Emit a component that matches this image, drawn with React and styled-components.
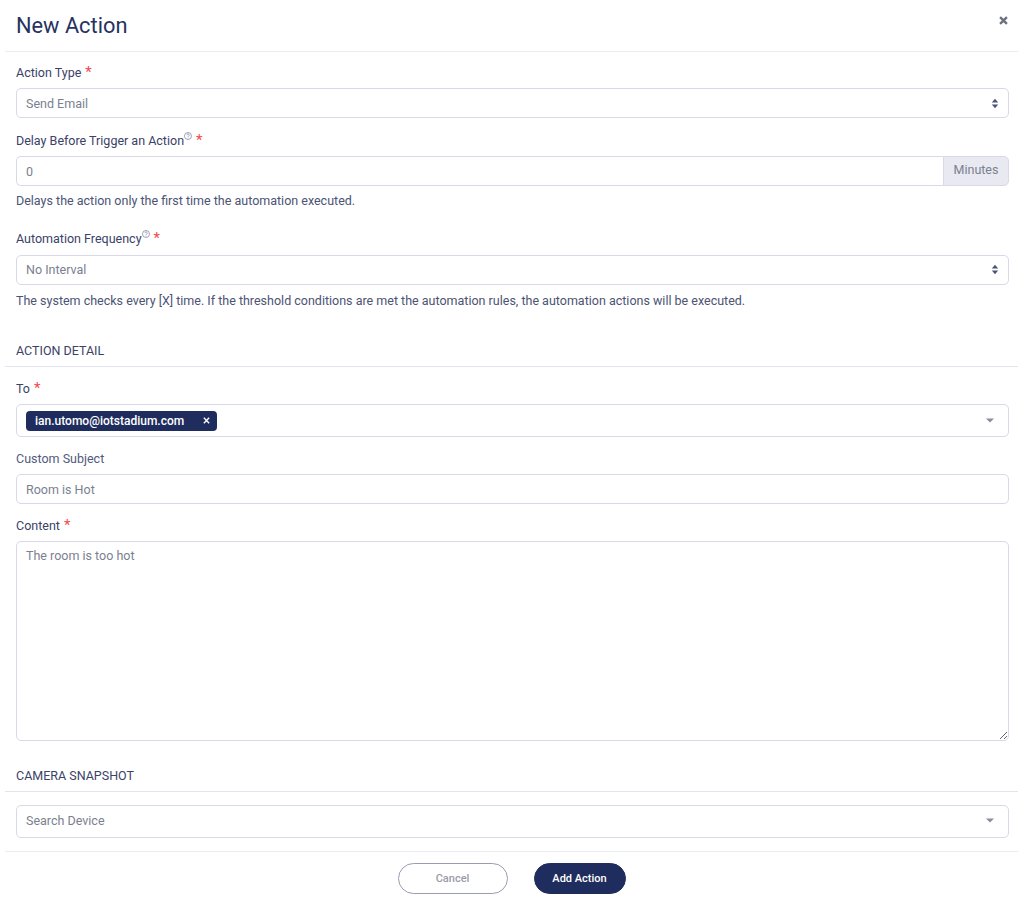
import React from 'react';
import styled, { createGlobalStyle } from 'styled-components';

const GlobalStyle = createGlobalStyle`
  html, body {
    margin: 0;
    background: #fff;
  }
  body {
    font-family: Roboto, "Liberation Sans", sans-serif;
    color: #3a4268;
  }
  * {
    box-sizing: border-box;
  }
`;

const Modal = styled.div`
  width: 1024px;
  height: 905px;
  overflow: hidden;
  background: #fff;
  display: flex;
  flex-direction: column;
`;

const Header = styled.header`
  height: 52px;
  margin: 0 6px 0 5px;
  padding: 0 10px 0 11px;
  display: flex;
  align-items: center;
  justify-content: space-between;
  border-bottom: 1px solid #ebebf3;
`;

const Title = styled.h1`
  margin: 0;
  font-size: 21.8px;
  font-weight: 400;
  line-height: 26px;
  color: #27325f;
`;

const CloseButton = styled.button`
  width: 9px;
  height: 9px;
  margin: 0 0 10px;
  padding: 0;
  border: 0;
  background: none;
  display: flex;
  color: #6b6f80;
`;

const Body = styled.div`
  padding: 0 15px 0 16px;
  display: flex;
  flex-direction: column;
`;

const Label = styled.label`
  display: block;
  height: 16px;
  margin-top: ${p => p.$top}px;
  margin-bottom: ${p => p.$bottom || 7}px;
  font-size: 12.5px;
  line-height: 16px;
  color: ${p => p.$muted ? '#515a7d' : '#3a4268'};
  white-space: nowrap;
`;

const Required = styled.span`
  margin-left: 4px;
  font-size: 15px;
  line-height: 12px;
  color: #f4474d;
`;

const HintIcon = styled.svg`
  width: 8px;
  height: 8px;
  vertical-align: 5px;
  color: #6b7190;
`;

const fieldStyles = `
  width: 100%;
  border: 1px solid #d8d8ea;
  border-radius: 5px;
  background: #fff;
  font-family: Roboto, "Liberation Sans", sans-serif;
  font-size: 12.5px;
  color: #7b7f90;
`;

const Select = styled.div`
  ${fieldStyles}
  height: ${p => p.$height}px;
  margin-top: ${p => p.$top || 0}px;
  padding: 0 9px ${p => p.$lift || 0}px;
  display: flex;
  align-items: center;
  justify-content: space-between;
`;

const Input = styled.input`
  ${fieldStyles}
  height: 30px;
  padding: 0 9px;
  outline: none;
  display: block;
`;

const InputGroup = styled.div`
  display: flex;
  height: 30px;
`;

const GroupInput = styled(Input)`
  flex: 1;
  border-radius: 5px 0 0 5px;
  border-right: 0;
`;

const Addon = styled.span`
  width: 66px;
  padding-bottom: 4px;
  display: flex;
  align-items: center;
  justify-content: center;
  border: 1px solid #d8d8ea;
  border-radius: 0 5px 5px 0;
  background: #e9e9f1;
  font-size: 12.5px;
  color: #7b7f90;
`;

const HelpText = styled.p`
  margin: ${p => p.$top || 7}px 0 0;
  font-size: 12.5px;
  line-height: 16px;
  color: #4c5374;
`;

const Textarea = styled.textarea`
  ${fieldStyles}
  height: 200px;
  padding: 6px 9px;
  outline: none;
  display: block;
  line-height: 16px;
  resize: vertical;
`;

const SectionTitle = styled.div`
  margin: ${p => p.$top}px 6px 0 5px;
  padding: 0 11px 7px;
  font-size: 12.5px;
  line-height: 16px;
  color: #3a4268;
  border-bottom: 1px solid #e4e4ef;
`;

const Tag = styled.span`
  width: 191px;
  height: 20px;
  padding: 0 7px 0 9px;
  display: flex;
  align-items: center;
  justify-content: space-between;
  border-radius: 4px;
  background: #1f2d5e;
  font-size: 12px;
  font-weight: 500;
  color: #fff;
`;

const Footer = styled.footer`
  margin: 13px 6px 0 5px;
  padding-top: 11px;
  display: flex;
  justify-content: center;
  gap: 26px;
  border-top: 1px solid #ebebf3;
`;

const Button = styled.button`
  height: 31px;
  width: ${p => p.$primary ? 92 : 110}px;
  border: 1px solid ${p => p.$primary ? '#1f2d5e' : '#9a9cb2'};
  border-radius: 16px;
  background: ${p => p.$primary ? '#1f2d5e' : '#fff'};
  font-family: Roboto, "Liberation Sans", sans-serif;
  font-size: 11px;
  font-weight: 500;
  color: ${p => p.$primary ? '#fff' : '#9a9cab'};
`;

const Sorter = () => (
  <svg width="8" height="11" viewBox="0 0 8 11" fill="#4c5374">
    <path d="M4 .8 7.2 4.4H.8zM4 10.2.8 6.6h6.4z" />
  </svg>
);

const Caret = () => (
  <svg width="8" height="5" viewBox="0 0 8 5" fill="#8b8d98" style={{ marginRight: 5 }}>
    <path d="M0 .5h8L4 4.5z" />
  </svg>
);

const Cross = ({ size, width }) => (
  <svg width={size} height={size} viewBox="0 0 10 10" stroke="currentColor" strokeWidth={width} fill="none">
    <path d="M1.2 1.2l7.6 7.6M8.8 1.2 1.2 8.8" />
  </svg>
);

const Help = () => (
  <HintIcon viewBox="0 0 10 10" fill="none" stroke="currentColor" strokeWidth="0.8">
    <circle cx="5" cy="5" r="4.4" />
    <path d="M3.5 3.9a1.5 1.5 0 1 1 2.3 1.3c-.5.3-.8.6-.8 1.2M5 7.1v.8" />
  </HintIcon>
);

const App = () => (
  <Modal>
    <GlobalStyle />
    <Header>
      <Title>New Action</Title>
      <CloseButton><Cross size={9} width={2.6} /></CloseButton>
    </Header>
    <Body>
      <Label $top={13}>Action Type<Required>*</Required></Label>
      <Select $height={30}>Send Email<Sorter /></Select>

      <Label $top={14} $bottom={8}>Delay Before Trigger an Action<Help /><Required>*</Required></Label>
      <InputGroup>
        <GroupInput readOnly value="0" />
        <Addon>Minutes</Addon>
      </InputGroup>
      <HelpText>Delays the action only the first time the automation executed.</HelpText>

      <Label $top={21} $bottom={9}>Automation Frequency<Help /><Required>*</Required></Label>
      <Select $height={30} $lift={2}>No Interval<Sorter /></Select>
      <HelpText $top={8}>The system checks every [X] time. If the threshold conditions are met the automation rules, the automation actions will be executed.</HelpText>
    </Body>

    <SectionTitle $top={34}>ACTION DETAIL</SectionTitle>

    <Body>
      <Label $top={14}>To<Required>*</Required></Label>
      <Select $height={33}>
        <Tag>ian.utomo@iotstadium.com<Cross size={7} width={2} /></Tag>
        <Caret />
      </Select>

      <Label $top={14} $muted>Custom Subject</Label>
      <Input readOnly value="Room is Hot" />

      <Label $top={14}>Content<Required>*</Required></Label>
      <Textarea readOnly defaultValue="The room is too hot" />
    </Body>

    <SectionTitle $top={27}>CAMERA SNAPSHOT</SectionTitle>

    <Body>
      <Select $height={33} $top={13} $lift={2}>Search Device<Caret /></Select>
    </Body>

    <Footer>
      <Button>Cancel</Button>
      <Button $primary>Add Action</Button>
    </Footer>
  </Modal>
);

export default App;
